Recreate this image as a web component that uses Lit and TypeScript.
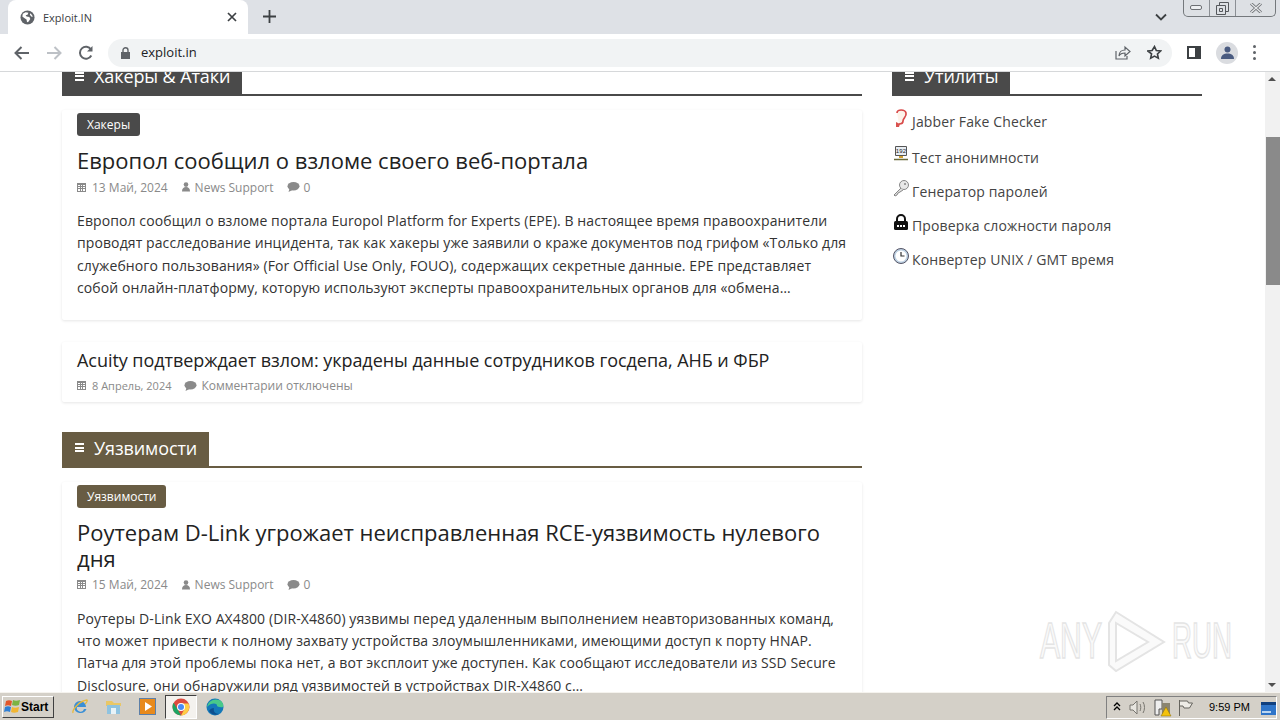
import { LitElement, html, css, svg } from 'lit';
import { customElement } from 'lit/decorators.js';

const calIcon = svg`<svg width="9" height="9" viewBox="0 0 9 9"><path fill="#8a8a8a" d="M0 0h9v9H0z"/><path fill="#fff" d="M1 2h2v1H1zM4 2h1v1H4zM6 2h2v1H6zM1 4h2v1H1zM4 4h1v1H4zM6 4h2v1H6zM1 6h2v2H1zM4 6h1v2H4zM6 6h2v2H6z"/></svg>`;
const userIcon = svg`<svg width="8" height="10" viewBox="0 0 8 10"><circle cx="4" cy="2.6" r="2.3" fill="#8a8a8a"/><path fill="#8a8a8a" d="M0 9.5C0 6.5 1.5 5 4 5s4 1.5 4 4.500z"/></svg>`;
const chatIcon = svg`<svg width="13" height="10" viewBox="0 0 13 10"><ellipse cx="6.500" cy="4.300" rx="6" ry="4.200" fill="#8a8a8a"/><path fill="#8a8a8a" d="M2.500 6.500 1.500 10l4-2z"/></svg>`;

@customElement('app-root')
export class AppRoot extends LitElement {
  static styles = css`
    :host { display: block; width: 1280px; height: 720px; overflow: hidden; font-family: "Open Sans", sans-serif; background: #fff; }
    .screen { display: flex; flex-direction: column; height: 720px; }

    .tabstrip { height: 34px; flex: none; background: #dee1e6; display: flex; position: relative; }
    .tab { width: 240px; margin-left: 8px; height: 34px; background: #fff; border-radius: 8px 8px 0 0; display: flex; align-items: center; box-sizing: border-box; padding-left: 12px; font-size: 11px; color: #3c4043; }
    .tab .name { margin-left: 8px; flex: 1; }
    .tab .x { margin-right: 11px; display: flex; }
    .plus { margin-left: 15px; margin-top: 10px; display: block; }
    .chev { position: absolute; left: 1155px; top: 13px; }
    .winbtns { position: absolute; left: 1183px; top: 0; width: 93px; height: 17px; box-sizing: border-box; border: 1px solid #74787c; border-top: none; border-radius: 0 0 5px 5px; display: flex; background: #dde0e4; }
    .winbtns div { display: flex; align-items: center; justify-content: center; border-right: 1px solid #8b8f94; }
    .winbtns div:last-child { border-right: none; }

    .toolbar { height: 37px; flex: none; background: #fff; border-bottom: 1px solid #d6d8da; display: flex; align-items: center; }
    .nav { display: flex; align-items: center; gap: 16px; margin-left: 14px; }
    .omni { margin-left: 14px; width: 1064px; height: 28px; border-radius: 14px; background: #f1f3f4; display: flex; align-items: center; box-sizing: border-box; padding-left: 13px; }
    .omni .url { margin-left: 11px; font-size: 13px; color: #202124; flex: 1; margin-top: -1px; }
    .omni .end { display: flex; align-items: center; gap: 16px; margin-right: 10px; }
    .tools { display: flex; align-items: center; margin-left: 15px; }
    .avatar { margin-left: 15px; width: 22px; height: 22px; border-radius: 50%; background: #dadce0; display: flex; align-items: center; justify-content: center; overflow: hidden; }
    .dots { margin-left: 15px; display: flex; flex-direction: column; gap: 3px; }
    .dots i { display: block; width: 3px; height: 3px; border-radius: 50%; background: #5f6368; }

    .viewport { flex: 1; min-height: 0; display: flex; position: relative; overflow: hidden; }
    .page { flex: 1; min-width: 0; overflow: hidden; }
    .columns { display: flex; gap: 30px; margin: -12px 0 0 62px; align-items: flex-start; }
    .main { width: 800px; flex: none; }
    .side { width: 310px; flex: none; }

    .head { display: flex; box-sizing: border-box; border-bottom: 2px solid #4a4a4a; height: 36px; margin-bottom: 14px; }
    .head.brown { border-color: #685c43; }
    .head h3 { margin: 0; box-sizing: border-box; height: 36px; background: #4a4a4a; color: #fff; font-weight: 400; font-size: 18px; letter-spacing: -0.1px; padding: 0 12px 4px 13px; display: flex; align-items: center; gap: 10px; }
    .head.brown h3 { background: #685c43; }
    .burger { width: 9px; height: 9px; flex: none; border-top: 2px solid #fff; border-bottom: 2px solid #fff; position: relative; box-sizing: border-box; }
    .burger::after { content: ""; position: absolute; left: 0; right: 0; top: 1.500px; height: 2px; background: #fff; }

    .card { background: #fff; box-shadow: 0 1px 3px rgba(0,0,0,.1); padding: 3px 15px 20px; border-radius: 2px; margin-bottom: 22px; }
    .card.small { padding: 6px 15px 7px; margin-bottom: 30px; }
    .tag { display: inline-block; height: 23px; line-height: 23px; padding: 0 10px; border-radius: 3px; background: #4a4a4a; color: #fff; font-size: 12px; vertical-align: top; }
    .tag.brown { background: #685c43; }
    h2 { margin: 11px 0 0; font-weight: 400; font-size: 22px; line-height: 26px; color: #222; }
    .small h2 { margin: 0; font-size: 18px; letter-spacing: -0.05px; line-height: 25px; }
    .meta { display: flex; align-items: center; margin-top: 5px; height: 18px; font-size: 12px; color: #8a8a8a; }
    .meta span { display: inline-flex; align-items: center; gap: 6px; }
    .meta .date { margin-right: 14px; }
    .meta .author { margin-right: 13px; gap: 5px; }
    .meta .comments { gap: 4px; }
    .small .meta { margin-top: 4px; }
    .small .date { font-size: 11px; margin-right: 13px; }
    p { margin: 14px 0 0; font-size: 14px; letter-spacing: 0.1px; line-height: 22.400px; color: #333; white-space: nowrap; }

    .util { list-style: none; margin: 0; padding: 0; font-size: 14px; letter-spacing: 0.13px; color: #444; }
    .util li { display: flex; align-items: center; height: 34px; gap: 2px; }
    .util li:first-child { height: 22px; margin-bottom: 8px; }
    .util svg { flex: none; margin-top: -6px; }

    .scrollbar { width: 15px; flex: none; background: #f1f1f1; position: relative; }
    .thumb { position: absolute; left: 1px; top: 65px; height: 148px; background: #8a8a8a; width: 14px; }
    .arrow { position: absolute; left: 3px; width: 0; height: 0; border-left: 4px solid transparent; border-right: 4px solid transparent; }
    .arrow.up { top: 5px; border-bottom: 4px solid #505050; }
    .arrow.down { bottom: 5px; border-top: 4px solid #505050; }

    .mark { position: absolute; left: 1036px; top: 537px; pointer-events: none; }
    .mark text { font-family: "Liberation Sans", sans-serif; }

    .taskbar { height: 28px; flex: none; box-sizing: border-box; background: #d4d0c8; border-top: 1px solid #f5f3ee; display: flex; align-items: center; position: relative; }
    .start { margin-left: 2px; width: 52px; height: 22px; box-sizing: border-box; border: 1px solid; border-color: #fff #404040 #404040 #fff; display: flex; align-items: center; padding-left: 1px; font-family: "Liberation Sans", sans-serif; font-weight: 700; font-size: 12px; color: #000; }
    .apps { display: flex; align-items: center; margin-left: 9px; }
    .app { width: 33.700px; height: 24px; display: flex; align-items: center; justify-content: center; box-sizing: border-box; }
    .app.on { background: #f4f2ee; border: 1px solid; border-color: #404040 #fff #fff #404040; width: 31.700px; margin: 0 1px; }
    .tray { position: absolute; left: 1106px; top: 3px; width: 171px; height: 23px; box-sizing: border-box; border: 1px solid; border-color: #808080 #fff #fff #808080; display: flex; align-items: center; font-family: "Liberation Sans", sans-serif; font-size: 11px; color: #000; }
    .tray .clock { position: absolute; left: 102px; top: 4px; }
    .tray svg { position: absolute; }
    .desk { position: absolute; left: 1261px; top: 9px; }
  `;

  render() {
    return html`
      <div class="screen">
        <div class="tabstrip">
          <div class="tab">
            <svg width="15" height="15" viewBox="0 0 16 16"><circle cx="8" cy="8" r="7.500" fill="#5f6368"/><path fill="#fff" d="M3 4l3-1.500L9 3 8 5 6 5.500 7 7l3 .5 1 2-2 3-1.500.5L7 10 4.500 8.500 2.500 7zM11 3.500l2 2 .500 2-1.500-.500-1.500-2z"/></svg>
            <span class="name">Exploit.IN</span>
            <span class="x"><svg width="10" height="10" viewBox="0 0 10 10"><path d="M1 1l8 8M9 1l-8 8" stroke="#3c4043" stroke-width="1.700"/></svg></span>
          </div>
          <svg class="plus" width="13" height="13" viewBox="0 0 13 13"><path d="M6.500 0v13M0 6.500h13" stroke="#3c4043" stroke-width="1.800"/></svg>
          <svg class="chev" width="12" height="8" viewBox="0 0 12 8"><path d="M1 1.500l5 5 5-5" fill="none" stroke="#3c4043" stroke-width="1.800"/></svg>
          <div class="winbtns">
            <div style="width:25px"><svg width="13" height="6" viewBox="0 0 13 6"><rect x=".5" y=".5" width="11" height="4" rx="1.500" fill="#eef0f2" stroke="#6d7074"/></svg></div>
            <div style="width:25px"><svg width="13" height="13" viewBox="0 0 13 13"><path fill="none" stroke="#55585c" d="M3.500 3V.5h9v9H10M.5 3.500h9v9h-9zM3.500 6.500h3v3h-3z"/></svg></div>
            <div style="flex:1"><svg width="12" height="10" viewBox="0 0 12 10"><path d="M1 .5l10 9M11 .5l-10 9" stroke="#6a6d71" stroke-width="3"/><path d="M1 .5l10 9M11 .5l-10 9" stroke="#e6e8ea" stroke-width="1.300"/></svg></div>
          </div>
        </div>

        <div class="toolbar">
          <div class="nav">
            <svg width="16" height="14" viewBox="0 0 16 14"><path d="M15 7H2M7.500 1 1.500 7l6 6" fill="none" stroke="#5f6368" stroke-width="2"/></svg>
            <svg width="16" height="14" viewBox="0 0 16 14"><path d="M1 7h13M8.500 1l6 6-6 6" fill="none" stroke="#bdc1c6" stroke-width="2"/></svg>
            <svg width="16" height="16" viewBox="0 0 16 16"><path d="M13.300 10.500A6 6 0 1 1 13 4.500" fill="none" stroke="#5f6368" stroke-width="2"/><path fill="#5f6368" d="M14.500 1v5.500H9z"/></svg>
          </div>
          <div class="omni">
            <svg width="9" height="12" viewBox="0 0 9 12"><path fill="#5f6368" d="M0 5h9v7H0z"/><path d="M2 5V3.200a2.500 2.500 0 0 1 5 0V5" fill="none" stroke="#5f6368" stroke-width="1.400"/></svg>
            <span class="url">exploit.in</span>
            <span class="end">
              <svg width="16" height="15" viewBox="0 0 16 15"><path d="M1 6v8h11v-3M4 11c0-4 3-6 6-6V2l5 4.500L10 11V8c-3 0-5 1-6 3z" fill="none" stroke="#5f6368" stroke-width="1.200"/></svg>
              <svg width="15" height="15" viewBox="0 0 24 24"><path d="M12 2.500l2.900 6.300 6.900.8-5.100 4.700 1.400 6.800-6.100-3.400-6.100 3.400 1.400-6.800L1.300 9.600l6.900-.8z" fill="none" stroke="#3c4043" stroke-width="2.600"/></svg>
            </span>
          </div>
          <div class="tools">
            <svg width="14" height="13" viewBox="0 0 14 13"><path fill="#3c4043" d="M0 0h14v13H0z"/><path fill="#fff" d="M2 2h6v9H2z"/></svg>
            <div class="avatar"><svg width="13" height="13" viewBox="0 0 13 13"><circle cx="6.500" cy="3.500" r="3" fill="#4a5b80"/><path fill="#4a5b80" d="M0 13c0-4 3-5.500 6.500-5.500S13 9 13 13z"/></svg></div>
            <div class="dots"><i></i><i></i><i></i></div>
          </div>
        </div>

        <div class="viewport">
          <div class="page">
            <div class="columns">
              <div class="main">
                <div class="head"><h3><span class="burger"></span>Хакеры &amp; Атаки</h3></div>
                <article class="card">
                  <span class="tag">Хакеры</span>
                  <h2>Европол сообщил о взломе своего веб-портала</h2>
                  <div class="meta"><span class="date">${calIcon}13 Май, 2024</span><span class="author">${userIcon}News Support</span><span class="comments">${chatIcon}0</span></div>
                  <p>Европол сообщил о взломе портала Europol Platform for Experts (EPE). В настоящее время правоохранители<br>проводят расследование инцидента, так как хакеры уже заявили о краже документов под грифом «Только для<br>служебного пользования» (For Official Use Only, FOUO), содержащих секретные данные. EPE представляет<br>собой онлайн-платформу, которую используют эксперты правоохранительных органов для «обмена…</p>
                </article>
                <article class="card small">
                  <h2>Acuity подтверждает взлом: украдены данные сотрудников госдепа, АНБ и ФБР</h2>
                  <div class="meta"><span class="date">${calIcon}8 Апрель, 2024</span><span class="comments">${chatIcon}Комментарии отключены</span></div>
                </article>
                <div class="head brown"><h3><span class="burger"></span>Уязвимости</h3></div>
                <article class="card">
                  <span class="tag brown">Уязвимости</span>
                  <h2>Роутерам D-Link угрожает неисправленная RCE-уязвимость нулевого дня</h2>
                  <div class="meta"><span class="date">${calIcon}15 Май, 2024</span><span class="author">${userIcon}News Support</span><span class="comments">${chatIcon}0</span></div>
                  <p>Роутеры D-Link EXO AX4800 (DIR-X4860) уязвимы перед удаленным выполнением неавторизованных команд,<br>что может привести к полному захвату устройства злоумышленниками, имеющими доступ к порту HNAP.<br>Патча для этой проблемы пока нет, а вот эксплоит уже доступен. Как сообщают исследователи из SSD Secure<br>Disclosure, они обнаружили ряд уязвимостей в устройствах DIR-X4860 с…</p>
                </article>
              </div>
              <aside class="side">
                <div class="head"><h3><span class="burger"></span>Утилиты</h3></div>
                <ul class="util">
                  <li><svg width="18" height="20" viewBox="0 0 18 20"><path d="M5 5c0-4 8-4 9 0 1 4-3 5-3 8 0 2-2 3-4 3" fill="#fdf3ea" stroke="#d84a4a" stroke-width="1.700"/><path d="M4 14l4 2-1 3H4z" fill="#d9534f"/></svg>Jabber Fake Checker</li>
                  <li><svg width="18" height="16" viewBox="0 0 18 16"><path fill="#e8edf2" stroke="#555" d="M3.500 .5h11v9h-11z"/><text x="9" y="7" font-size="6" font-family="Liberation Sans, sans-serif" text-anchor="middle" fill="#222">192</text><path fill="#d0a030" d="M7 10h4v2H7z"/><path stroke="#6b6b3a" stroke-width="1.500" d="M2 13.500h14"/></svg>Тест анонимности</li>
                  <li><svg width="18" height="17" viewBox="0 0 18 17"><circle cx="12" cy="5" r="4.500" fill="#e8e8e8" stroke="#888"/><circle cx="13" cy="4" r="1" fill="#888"/><path d="M9 8l-7 7 1 1 2-1 1-2 2-1 3-2" fill="#ddd" stroke="#888"/></svg>Генератор паролей</li>
                  <li><svg width="18" height="17" viewBox="0 0 18 17"><path d="M5 8V5a4 4 0 0 1 8 0v3" fill="none" stroke="#111" stroke-width="2"/><rect x="2" y="7" width="14" height="9" rx="1.500" fill="#111"/><path fill="#fff" d="M5 11h2v2H5zM8 11h2v2H8zM11 11h2v2h-2z"/></svg>Проверка сложности пароля</li>
                  <li><svg width="18" height="17" viewBox="0 0 18 17"><circle cx="9" cy="8" r="7.500" fill="#bcd0e2" stroke="#556"/><circle cx="9" cy="8" r="5.500" fill="#fff"/><path d="M9 4v4h3.500" fill="none" stroke="#333" stroke-width="1.200"/></svg>Конвертер UNIX / GMT время</li>
                </ul>
              </aside>
            </div>
          </div>
          <div class="scrollbar"><div class="arrow up"></div><div class="thumb"></div><div class="arrow down"></div></div>
          <svg class="mark" width="200" height="70" viewBox="0 0 200 70">
            <text x="4" y="49" font-size="50" textLength="62" lengthAdjust="spacingAndGlyphs" fill="#fafafa" stroke="#e4e4e4" stroke-width="1.500">ANY</text>
            <path d="M80 3 128 33 80 62 73 56V14z" fill="#fafafa" stroke="#e4e4e4" stroke-width="2"/>
            <path d="M80 14 112 33 80 52z" fill="#fff" stroke="#e4e4e4" stroke-width="2"/>
            <text x="136" y="49" font-size="50" textLength="60" lengthAdjust="spacingAndGlyphs" fill="#fafafa" stroke="#e4e4e4" stroke-width="1.500">RUN</text>
          </svg>
        </div>

        <div class="taskbar">
          <div class="start">
            <svg width="17" height="16" viewBox="0 0 17 16"><path fill="#e2572b" d="M2 2c2-1 4-1 6 0L7 7C5 6 3 6 1 7z"/><path fill="#7cb342" d="M9 1c2 1 4 1 7 0l-1 5c-2 1-5 1-7 0z"/><path fill="#2f7fd4" d="M1 8c2-1 4-1 6 0l-1 5c-2-1-4-1-6 0z"/><path fill="#f2b632" d="M8 8c2 1 4 1 7 0l-1 5c-3 1-5 1-7 0z"/></svg>
            Start
          </div>
          <div class="apps">
            <div class="app"><svg width="18" height="18" viewBox="0 0 18 18"><path d="M3 9a6 6 0 0 1 12 0H6a3.500 3.500 0 0 0 7 2h2.500A6.500 6.500 0 0 1 3 9z" fill="#3a8fd6"/><path d="M2 15C1 12 8 3 16 2c1 1-1 3-2 4" fill="none" stroke="#e8b93a" stroke-width="1.300"/></svg></div>
            <div class="app"><svg width="17" height="17" viewBox="0 0 17 17"><path fill="#e9c766" d="M1 3h6l2 2h7v3H1z"/><path fill="#8fc3e0" d="M2 7h13v9H2z"/><path fill="#e8f3f8" d="M6 10h5v6H6z"/></svg></div>
            <div class="app"><svg width="17" height="17" viewBox="0 0 17 17"><rect x=".5" y=".5" width="16" height="16" fill="#e88a1c" stroke="#5c7fa8"/><path fill="#fff" d="M6 4l7 4.500L6 13z"/></svg></div>
            <div class="app on"><svg width="18" height="18" viewBox="0 0 18 18"><circle cx="9" cy="9" r="8.500" fill="#dd4b3e"/><path fill="#1da462" d="M9 17.500A8.500 8.500 0 0 1 1.600 4.800L6 12z"/><path fill="#ffcd46" d="M9 5.500h7.500A8.500 8.500 0 0 1 9 17.500L12 12z"/><circle cx="9" cy="9" r="4" fill="#fff"/><circle cx="9" cy="9" r="3" fill="#4a8bf5"/></svg></div>
            <div class="app"><svg width="18" height="18" viewBox="0 0 18 18"><circle cx="9" cy="9" r="8.500" fill="#1478b8"/><path fill="#48c98a" d="M1 9C2 3 8 0 13 2c3 1 5 4 4 7-3 1-6-1-6-1 1-3-6-4-10 1z"/><path fill="#0d4f8f" d="M3 13c2 3 6 5 10 3-4 0-6-3-5-6-2 0-4 1-5 3z"/></svg></div>
          </div>
          <div class="tray">
            <svg style="left:6px;top:5px" width="8" height="10" viewBox="0 0 8 10"><path d="M1 4l3-3 3 3M1 8l3-3 3 3" fill="none" stroke="#000" stroke-width="1.300"/></svg>
            <svg style="left:22px;top:3px" width="17" height="15" viewBox="0 0 17 15"><path d="M1 5h3l4-4v13l-4-4H1z" fill="#e8e6e0" stroke="#77756f"/><path d="M11 4c1 2 1 5 0 7M14 2c2 3 2 8 0 11" fill="none" stroke="#77756f"/></svg>
            <svg style="left:47px;top:2px" width="18" height="18" viewBox="0 0 18 18"><path d="M1 1h7v9H5v6H1z" fill="#eee" stroke="#555"/><path d="M8 4h8v12H8z" fill="#8a8470"/><path d="M12 8l5 9H7z" fill="#f4c20d" stroke="#8a6d00" stroke-width=".5"/></svg>
            <svg style="left:71px;top:3px" width="16" height="16" viewBox="0 0 16 16"><path d="M1.500 0v16M1.500 1h8l1 2h4l-3 5H6L5 6H1.500" fill="#eeece6" stroke="#66645e"/></svg>
            <span class="clock">9:59 PM</span>
          </div>
          <svg class="desk" width="15" height="13" viewBox="0 0 15 13"><rect width="15" height="13" fill="#2f75c9"/><path fill="#10407f" d="M0 0h15v3H0z"/><path fill="#bcd6f0" d="M1 9h9v2H1z"/></svg>
        </div>
      </div>
    `;
  }
}
